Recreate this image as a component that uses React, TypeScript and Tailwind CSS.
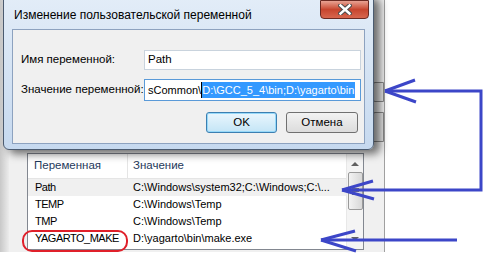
import React from 'react';

const font = { fontFamily: '"Liberation Sans", Arial, sans-serif' };

const rows = [
  { name: 'Path', value: 'C:\\Windows\\system32;C:\\Windows;C:\\...', selected: true },
  { name: 'TEMP', value: 'C:\\Windows\\Temp' },
  { name: 'TMP', value: 'C:\\Windows\\Temp' },
  { name: 'YAGARTO_MAKE', value: 'D:\\yagarto\\bin\\make.exe' },
];

// окно "Переменные среды" на заднем плане
const BackWindow = () => (
  <div className="absolute left-0 top-0 flex h-[252px] w-[385px] bg-[#f0f0f0]">
    <div className="w-[9px] bg-gradient-to-r from-[#c8c8c8] to-[#ececec]" />
    <div className="relative flex-1 border-r border-[#a0a0a0]">
      <div className="absolute left-[18px] top-[153px] flex h-[97px] w-[337px] border border-[#828790] bg-white">
        <div className="flex flex-1 flex-col overflow-hidden">
          <div className="flex h-[25px] shrink-0 border-b border-[#e5e5e5] text-[11.5px] text-[#1e395b]">
            <div className="flex w-[100px] items-center border-r border-[#e5e5e5] pl-[6px]">Переменная</div>
            <div className="flex items-center pl-[5px]">Значение</div>
          </div>
          {rows.map((r) => (
            <div
              key={r.name}
              className={`flex h-[17px] shrink-0 items-center text-[11px] text-black ${r.selected ? 'bg-[#f0f0f0]' : ''}`}
            >
              <div className="w-[100px] shrink-0 whitespace-nowrap pl-[7px] tracking-[-0.5px]">{r.name}</div>
              <div className="whitespace-nowrap pl-[5px]">{r.value}</div>
            </div>
          ))}
        </div>
        <div className="flex w-[17px] flex-col items-center border-l border-[#e8e8e8] bg-[#f4f4f4]">
          <div className="mt-[8px] h-0 w-0 border-x-[4px] border-b-[4px] border-x-transparent border-b-[#606060]" />
          <div className="mt-[6px] flex h-[38px] w-[15px] items-center justify-center rounded-[2px] border border-[#9a9a9a] bg-gradient-to-r from-[#f3f3f3] to-[#d8d8d8]">
            <div className="flex flex-col gap-[2px]">
              <div className="h-px w-[7px] bg-[#707070]" />
              <div className="h-px w-[7px] bg-[#707070]" />
              <div className="h-px w-[7px] bg-[#707070]" />
            </div>
          </div>
          <div className="mt-auto mb-[8px] h-0 w-0 border-x-[4px] border-t-[4px] border-x-transparent border-t-[#606060]" />
        </div>
      </div>
      <div className="absolute right-0 top-[82px] h-[20px] w-[11px] rounded-l-[2px] border border-[#8a8a8a] bg-[#e6e6e6]" />
      <div className="absolute right-0 top-[112px] h-[30px] w-[11px] rounded-tl-[2px] border border-[#8a8a8a] bg-[#e6e6e6]" />
    </div>
  </div>
);

const Dialog = () => (
  <div className="absolute left-[3px] top-[-6px] h-[156px] w-[371px] rounded-[6px] border border-[#4b5b70] bg-gradient-to-b from-[#e3edf8] to-[#c6d9ef] shadow-[6px_4px_8px_rgba(0,0,0,0.55)]">
    <div className="flex h-[34px] items-center pl-[10px] pt-[6px] text-[12px] text-black">
      Изменение пользовательской переменной
    </div>
    <div className="absolute left-[316px] top-[5px] flex h-[19px] w-[49px] items-center justify-center rounded-b-[4px] border border-[#6b2a22] bg-gradient-to-b from-[#e8a293] via-[#c7452e] to-[#d7664e]">
      <svg width="14" height="11" viewBox="0 0 14 11">
        <path d="M2.5 1.5 L11.5 9.5 M11.5 1.5 L2.5 9.5" stroke="#4a4a4a" strokeWidth="4.5" strokeLinecap="square" />
        <path d="M2.5 1.5 L11.5 9.5 M11.5 1.5 L2.5 9.5" stroke="#ffffff" strokeWidth="2.5" strokeLinecap="square" />
      </svg>
    </div>
    <div className="mx-[8px] h-[115px] border border-[#8da2bf] bg-[#f0f0f0] text-[11.5px] text-black">
      <div className="mt-[20px] flex h-[20px] items-center">
        <div className="w-[131px] shrink-0 whitespace-nowrap pl-[8px]">Имя переменной:</div>
        <div className="flex h-[20px] w-[217px] shrink-0 items-center border border-[#c9d3dd] bg-white pl-[3px]">Path</div>
      </div>
      <div className="mt-[9px] flex h-[22px] items-center">
        <div className="w-[131px] shrink-0 whitespace-nowrap pl-[8px]">Значение переменной:</div>
        <div className="flex h-[22px] w-[217px] shrink-0 items-center overflow-hidden whitespace-nowrap border border-[#5a9ad8] bg-white pl-[3px] text-[11px]">
          <span className="shrink-0">sCommon\</span>
          <span className="flex h-[16px] shrink-0 items-center border-l border-black bg-[#3399ff] pr-[1px] text-white">D:\GCC_5_4\bin;D:\yagarto\bin</span>
        </div>
      </div>
      <div className="mt-[11px] flex gap-[9px] pl-[193px]">
        <div className="flex h-[21px] w-[71px] items-center justify-center rounded-[3px] border border-[#3c7fb1] bg-gradient-to-b from-[#eaf6fd] to-[#c4e5f6] shadow-[inset_0_0_0_1px_#97d9f9]">
          OK
        </div>
        <div className="flex h-[21px] w-[72px] items-center justify-center rounded-[3px] border border-[#707070] bg-gradient-to-b from-[#f2f2f2] to-[#dcdcdc]">
          Отмена
        </div>
      </div>
    </div>
  </div>
);

const Marks = () => (
  <svg className="pointer-events-none absolute left-0 top-0" width="496" height="261" viewBox="0 0 496 261">
    <g stroke="#3c46c8" strokeWidth="3" fill="none">
      <path d="M385 91 H481 V190 H342" />
      <path d="M385 91 L415 80 M385 91 L416 102" />
      <path d="M342 190 L373 181 M342 190 L374 199" />
      <path d="M321 240 H457" />
      <path d="M321 240 L355 231 M321 240 L356 251" />
    </g>
    <rect x="23" y="231" width="104" height="20" rx="9" stroke="#e0202a" strokeWidth="2" fill="none" />
  </svg>
);

export default function App() {
  return (
    <div className="relative h-[261px] w-[496px] overflow-hidden bg-white" style={font}>
      <BackWindow />
      <Dialog />
      <Marks />
    </div>
  );
}
